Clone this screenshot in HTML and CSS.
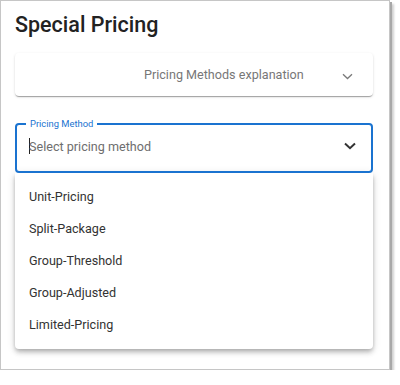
FILE: index.html
```html
<!DOCTYPE html>
<html>
<head>
<meta charset="utf-8">
<link rel="stylesheet" href="styles.css">
</head>
<body>
<div class="frame">
  <h1 class="title">Special Pricing</h1>
  <div class="panel">
    <span class="panel-text">Pricing Methods explanation</span>
    <svg class="panel-chevron" width="11" height="7" viewBox="0 0 11 7"><path d="M1 1.2 L5.5 5.5 L10 1.2" fill="none" stroke="#7a7a7a" stroke-width="1.3"/></svg>
  </div>
  <div class="field">
    <span class="field-label">Pricing Method</span>
    <span class="caret"></span><span class="placeholder">Select pricing method</span>
    <svg class="field-chevron" width="12" height="8" viewBox="0 0 12 8"><path d="M1 1.5 L6 6.2 L11 1.5" fill="none" stroke="#333" stroke-width="2"/></svg>
  </div>
  <ul class="menu">
    <li>Unit-Pricing</li>
    <li>Split-Package</li>
    <li>Group-Threshold</li>
    <li>Group-Adjusted</li>
    <li>Limited-Pricing</li>
  </ul>
</div>
</body>
</html>
```
FILE: styles.css
```css
html, body {
  margin: 0;
  padding: 0;
  background: #fff;
}
body {
  font-family: Roboto, "Liberation Sans", sans-serif;
}
.frame {
  box-sizing: border-box;
  width: 390px;
  height: 370px;
  border: 1px solid #c6c6c6;
  box-shadow: 2px 2px 0 #a8a8a8, 4px 4px 2px #d0d0d0;
  padding: 11px 16px 0 14px;
  background: #fff;
}
.title {
  margin: 0;
  font-size: 21.5px;
  line-height: 26px;
  font-weight: 500;
  color: #222;
}
.panel {
  margin-top: 15px;
  height: 43px;
  border-radius: 4px;
  box-shadow: 0 2px 1px -1px rgba(0,0,0,.2), 0 1px 1px 0 rgba(0,0,0,.14), 0 1px 3px 0 rgba(0,0,0,.12);
  display: flex;
  align-items: center;
  padding: 0 20px 0 129px;
}
.panel-text {
  flex: 1;
  font-size: 12.6px;
  color: #777;
}
.panel-chevron {
  display: block;
  margin-top: 3px;
}
.field {
  position: relative;
  margin-top: 27px;
  box-sizing: border-box;
  height: 50px;
  border: 2px solid #1a73d0;
  border-radius: 4px;
  display: flex;
  align-items: center;
  padding: 0 15px 4px 12px;
}
.field-label {
  position: absolute;
  left: 9px;
  top: -8px;
  padding: 0 4px;
  background: #fff;
  font-size: 9.4px;
  line-height: 14px;
  color: #1a73d0;
}
.caret {
  width: 1px;
  height: 16px;
  background: #222;
  margin-right: -1px;
}
.placeholder {
  flex: 1;
  font-size: 12.6px;
  color: #6e6e6e;
}
.field-chevron {
  display: block;
}
.menu {
  list-style: none;
  margin: 0;
  padding: 8px 0;
  background: #fff;
  border-radius: 0 0 4px 4px;
  box-shadow: 0 2px 4px -1px rgba(0,0,0,.2), 0 4px 5px 0 rgba(0,0,0,.14), 0 1px 10px 0 rgba(0,0,0,.12);
}
.menu li {
  height: 32px;
  line-height: 32px;
  padding-left: 14px;
  font-size: 12.6px;
  color: #333;
}
```
